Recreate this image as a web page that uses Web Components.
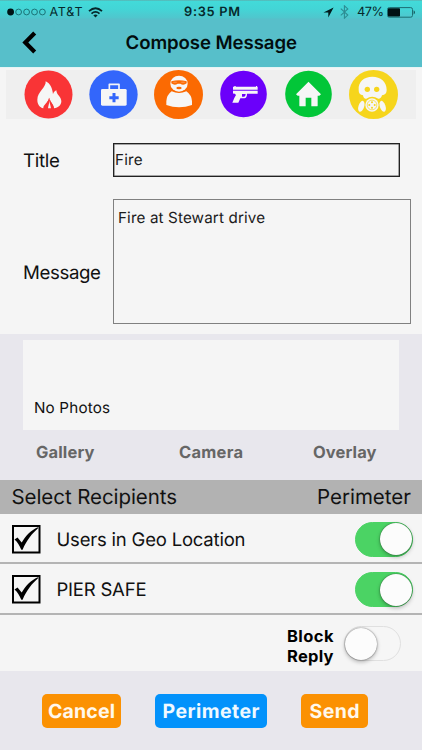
<!DOCTYPE html>
<html lang="en">
<head>
<meta charset="utf-8">
<title>Compose Message</title>
<style>
html,body{margin:0;padding:0}
body{font-family:Inter,"Liberation Sans",sans-serif;color:#111;background:#f5f5f5}
</style>
</head>
<body>
<compose-screen></compose-screen>
<script>
const define = (name, markup, after) => {
  const t = document.createElement('template');
  t.innerHTML = markup;
  customElements.define(name, class extends HTMLElement {
    constructor() {
      super();
      this.attachShadow({mode: 'open'}).append(t.content.cloneNode(true));
    }
    connectedCallback() { if (after) after(this, this.shadowRoot); }
  });
};

// Single-line label: size, weight and a target width reached by tracking.
define('ui-text', `<style>
:host{display:block;white-space:nowrap;flex:none;text-rendering:geometricPrecision}
span{display:inline-block;white-space:nowrap}
</style><span><slot></slot></span>`, (el, root) => {
  const s = root.querySelector('span');
  const w = +el.getAttribute('w');
  el.style.fontSize = el.getAttribute('size') + 'px';
  el.style.fontWeight = el.getAttribute('weight') || 400;
  el.style.lineHeight = (el.getAttribute('lh') || 24) + 'px';
  el.style.width = w + 'px';
  const n = el.textContent.length;
  s.style.letterSpacing = ((w - s.getBoundingClientRect().width) / (n - 1)).toFixed(3) + 'px';
});

define('status-bar', `<style>
:host{display:grid;grid-template-columns:1fr auto 1fr;height:19px;padding:5px 7px 0 7px;box-sizing:border-box;align-items:center;
background:linear-gradient(#5bb0b0 0,#42dad9 1.5px,#43d5d6 9px,#50c6cd 18px,#56bfc9);color:#07292c}
div{display:flex;align-items:center;height:14px}
.r{justify-content:flex-end}
</style>
<div>
<svg width="39" height="8" viewBox="0 0 39 8"><circle cx="3.6" cy="4" r="3.4" fill="#001315"/><g fill="none" stroke="#17696d" stroke-width=".9"><circle cx="11.6" cy="4" r="2.9"/><circle cx="19.6" cy="4" r="2.9"/><circle cx="27.5" cy="4" r="2.9"/><circle cx="35.4" cy="4" r="2.9"/></g></svg>
<ui-text size="12.5" w="33" lh="14" style="margin-left:3.5px;padding-top:1px">AT&amp;T</ui-text>
<svg width="15" height="11" viewBox="0 0 15 11" style="margin-left:5.5px"><g fill="none" stroke="#06272a" stroke-width="1.8"><path d="M1 4.1Q7.5-1.7 14 4.1"/><path d="M3.5 6.6Q7.5 3.2 11.5 6.6"/></g><path d="M5.3 8.3Q7.5 6.6 9.7 8.3L7.5 10.5Z" fill="#06272a"/></svg>
</div>
<div><ui-text size="12.8" weight="600" w="56" lh="14" style="margin-left:2px;padding-top:1px">9:35 PM</ui-text></div>
<div class="r">
<svg width="11" height="11" viewBox="0 0 11 11"><path d="M10.6.4L.5 5.6H5.3V10.4Z" fill="#001a1c"/></svg>
<svg width="9" height="14" viewBox="0 0 9 14" style="margin-left:6px"><path d="M.8 3.7L7.8 10.1L4.4 13.2V.8L7.8 3.9L.8 10.3" fill="none" stroke="#2d8c92" stroke-width="1.1"/></svg>
<ui-text size="12.8" w="27" lh="14" style="margin-left:8px;padding-top:1px">47%</ui-text>
<svg width="29" height="11" viewBox="0 0 29 11" style="margin-left:3px;margin-right:-1px"><rect x=".5" y=".6" width="25" height="9.6" rx="1.8" fill="none" stroke="#1d6d72"/><rect x="1" y="1.2" width="12" height="8.4" rx=".8" fill="#001113"/><path d="M26.7 3.3Q29 5.4 26.7 7.5Z" fill="#0c4448"/></svg>
</div>`);

define('nav-bar', `<style>
:host{display:grid;grid-template-columns:125.500px auto 1fr;height:48px;background:#57bfca;border-bottom:1px solid #e6f4f5;align-items:center;color:#020d0e}
svg{display:block;margin-left:22px}
</style>
<svg width="15" height="23" viewBox="0 0 15 23" style="margin-top:-2px"><path d="M12.7 2L3.3 11.5L12.7 21" fill="none" stroke="#000" stroke-width="4.2"/></svg>
<slot></slot>`);

const glyphs = {
  fire: ['#f93436', 72, '<path d="M65 34C67 52 40 66 40 89C40 103 47 112 58 115C57 104 73 97 76 83C79 97 90 104 90 115C103 113 112 105 112 94C112 80 98 76 97 61C91 63 88 68 87 73C85 54 79 41 65 34Z"/><path d="M76 84C74 98 66 104 67 115H84C85 104 78 98 76 84Z" fill="#f4f4f4"/><path d="M75 83C73 97 62 101 64 117H72C72 108 76 101 76 92C77 101 81 108 81 117H89C90 101 78 97 75 83Z" fill="#f93436"/>'],
  medical: ['#3366fb', 72.5, '<path d="M61 59V43H90V59" fill="none" stroke="#f4f4f8" stroke-width="5" stroke-linejoin="round"/><rect x="36" y="57" width="77" height="50" rx="4"/><path d="M75 69V97M61 83H89" stroke="#3366fb" stroke-width="9" fill="none"/>'],
  suspect: ['#fb6a02', 73.5, '<path d="M53 64Q75 74 97 64Q113 75 114 94V105Q75 119 37 105V94Q38 75 53 64Z"/><ellipse cx="75" cy="41" rx="28" ry="26" fill="#fb6a02"/><ellipse cx="75" cy="41" rx="26" ry="24"/><path d="M52 34Q75 27 98 34V40Q88 48 79 41H71Q62 48 52 40Z" fill="#fb6a02"/><ellipse cx="63" cy="37" rx="7" ry="2.5" fill="#ff8a38"/><ellipse cx="87" cy="37" rx="7" ry="2.5" fill="#ff8a38"/><ellipse cx="75" cy="54" rx="8" ry="4" fill="#fb6a02"/>'],
  weapon: ['#6b00fa', 70, '<path d="M42 50H46V48H50V50H111V48H114V50H116V59H42ZM42 62H116V71H84Q84 84 76 85H64L58 98H40Q45 84 51 75Q47 70 42 71Z"/><path d="M69 72V80H76Q80 79 80 72Z" fill="#6b00fa"/>'],
  home: ['#02c638', 70, '<path d="M73.500 35L111 73L106 77H101V107Q101 109 98 109H82V83H65V109H49Q46 109 46 107V77H41L36 73Z"/>'],
  gas: ['#f6d51c', 73.5, '<path d="M29 60C27 35 45 20 70 20S113 35 113 60C113 70 108 75 99 76C97 84 92 87 88 86Q69 74 52 86C47 87 43 83 42 76C33 75 29 70 29 60Z"/><g fill="#f6d51c"><circle cx="55" cy="58" r="8"/><circle cx="83" cy="58" r="8"/></g><circle cx="69" cy="105" r="20"/><circle cx="69" cy="105" r="14.500" fill="none" stroke="#f6d51c" stroke-width="2"/><g fill="#f6d51c"><circle cx="69" cy="97" r="3"/><circle cx="69" cy="113" r="3"/><circle cx="61" cy="105" r="3"/><circle cx="77" cy="105" r="3"/></g><ellipse cx="37" cy="109" rx="8.500" ry="17" transform="rotate(18 37 109)"/><ellipse cx="101" cy="109" rx="8.500" ry="17" transform="rotate(-18 101 109)"/>']
};
define('alert-icon', `<style>:host{display:block;width:49px;height:49px;justify-self:center}svg{display:block}</style><svg width="49" height="49" viewBox="0 0 147 147"></svg>`, (el, root) => {
  const [color, r, art] = glyphs[el.getAttribute('type')];
  root.querySelector('svg').innerHTML = `<circle cx="73.500" cy="${r < 71 ? 72 : 73.5}" r="${r}" fill="${color}"/><g fill="#f6f6f6">${art}</g>`;
});

define('icon-strip', `<style>
:host{display:grid;grid-template-columns:repeat(6,65px);margin:2px 6px 0;padding:0 10px;height:49px;background:#efefef}
</style><slot></slot>`);

define('form-row', `<style>
:host{display:grid;grid-template-columns:90px auto;align-items:center;justify-content:start;padding-left:23px}
</style><slot name="label"></slot><slot></slot>`);

define('text-field', `<style>
:host{display:block;box-sizing:border-box;border:1px solid #222;box-shadow:inset 0 0 0 .5px #555;color:#1c1c1c}
:host([area]){border-color:#808080;box-shadow:none}
</style><slot></slot>`);

define('photo-panel', `<style>
:host{display:block;background:#e8e7ed;height:146px;box-sizing:border-box;padding:6px 23px 0}
.box{height:89.500px;background:#f5f5f5;padding:56px 0 0 11px;box-sizing:border-box;width:376px}
.tabs{display:grid;grid-template-columns:143px 134px auto;padding:10px 0 0 13px;color:#666}
</style><div class="box"><slot></slot></div><div class="tabs"><slot name="tab"></slot></div>`);

define('list-header', `<style>
:host{display:flex;justify-content:space-between;align-items:center;height:34px;background:#b2b2b2;padding:0 11px 0 11.500px}
</style><slot></slot>`);

define('toggle-switch', `<style>
:host{display:flex;box-sizing:border-box;width:57px;height:35px;border-radius:18px;background:#f6f6f6;border:1.5px solid #e0e0e0;align-items:center;flex:none}
i{display:block;width:32px;height:32px;border-radius:50%;background:#fcfcfc;box-shadow:0 2px 4px #0004,0 0 1.5px #0009}
:host([on]){width:57.500px;background:#4bd364;border-color:#4bd364;justify-content:flex-end}
</style><i></i>`);

define('check-box', `<style>:host,svg{display:block}</style>
<svg width="29" height="29" viewBox="0 0 29 29"><rect x="1" y="1" width="26.500" height="26.500" fill="#f5f5f5" stroke="#000" stroke-width="2"/><path d="M2.500 14.500L5.500 12.500L9.700 17.500C14 10.500 19 5.300 25.700 2.300L26.300 3C20 8.500 14.500 15.500 10.600 24.700H9.300C7.500 20.500 5.500 17 2.500 14.500Z" fill="#000"/></svg>`);

define('recipient-row', `<style>
:host{display:flex;align-items:center;height:47px;border-bottom:2px solid #b4b4b4;padding:2px 9.500px 0 11.500px}
check-box{margin-right:16px}
toggle-switch{margin-left:auto}
::slotted(ui-text){padding-top:1px}
</style><check-box></check-box><slot></slot><toggle-switch on></toggle-switch>`);

define('block-reply', `<style>
:host{display:flex;justify-content:flex-end;align-items:center;height:56px;padding-right:21px;color:#000}
div{margin:5px 10.500px 0 0}
toggle-switch{margin-top:1px}
</style><div><slot></slot></div><toggle-switch></toggle-switch>`);

define('action-button', `<style>
:host{display:flex;justify-content:center;align-items:center;height:34px;border-radius:5px;background:#fb9102;color:#fff8ec}
:host([primary]){background:#0292fb;color:#eff9ff}
</style><slot></slot>`);

define('action-bar', `<style>
:host{display:grid;grid-template-columns:79px 112px 67px;column-gap:34px;height:79px;box-sizing:border-box;padding:22.500px 0 0 42px;background:#e8e7ed}
</style><slot></slot>`);

define('compose-screen', `<style>
:host{display:flex;flex-direction:column;width:422px;height:750px;overflow:hidden;background:#f5f5f5}
:host>*{flex:none}
</style>
<status-bar></status-bar>
<nav-bar><ui-text size="18.600" weight="600" w="171.500">Compose Message</ui-text></nav-bar>
<icon-strip><alert-icon type="fire"></alert-icon><alert-icon type="medical"></alert-icon><alert-icon type="suspect"></alert-icon><alert-icon type="weapon"></alert-icon><alert-icon type="home"></alert-icon><alert-icon type="gas"></alert-icon></icon-strip>
<form-row style="margin-top:24px;height:34px"><ui-text slot="label" size="18.700" w="37" style="padding-top:1px">Title</ui-text>
<text-field style="width:286.500px;height:34px;padding:4px 0 0 1px"><ui-text size="15.200" w="27.500">Fire</ui-text></text-field></form-row>
<form-row style="margin-top:22px;height:125px;margin-bottom:10px"><ui-text slot="label" size="18.700" w="78" style="padding-top:23px">Message</ui-text>
<text-field area style="width:297.500px;height:125px;padding:6px 0 0 4px"><ui-text size="15.200" w="147">Fire at Stewart drive</ui-text></text-field></form-row>
<photo-panel><ui-text size="15.200" w="76">No Photos</ui-text>
<ui-text slot="tab" size="16.500" weight="650" w="58.500">Gallery</ui-text><ui-text slot="tab" size="16.500" weight="650" w="64">Camera</ui-text><ui-text slot="tab" size="16.500" weight="650" w="63.500">Overlay</ui-text></photo-panel>
<list-header><ui-text size="20.500" w="165.500">Select Recipients</ui-text><ui-text size="20.500" w="94">Perimeter</ui-text></list-header>
<recipient-row style="height:46px"><ui-text size="18.500" w="189">Users in Geo Location</ui-text></recipient-row>
<recipient-row><ui-text size="18.500" w="90">PIER SAFE</ui-text></recipient-row>
<block-reply><ui-text size="16.500" weight="700" w="46.500" lh="20">Block</ui-text><ui-text size="16.500" weight="700" w="46.500" lh="20">Reply</ui-text></block-reply>
<action-bar>
<action-button><ui-text size="19.500" weight="650" w="67">Cancel</ui-text></action-button>
<action-button primary><ui-text size="19.500" weight="650" w="97">Perimeter</ui-text></action-button>
<action-button><ui-text size="19.500" weight="650" w="50">Send</ui-text></action-button>
</action-bar>`);
</script>
</body>
</html>
